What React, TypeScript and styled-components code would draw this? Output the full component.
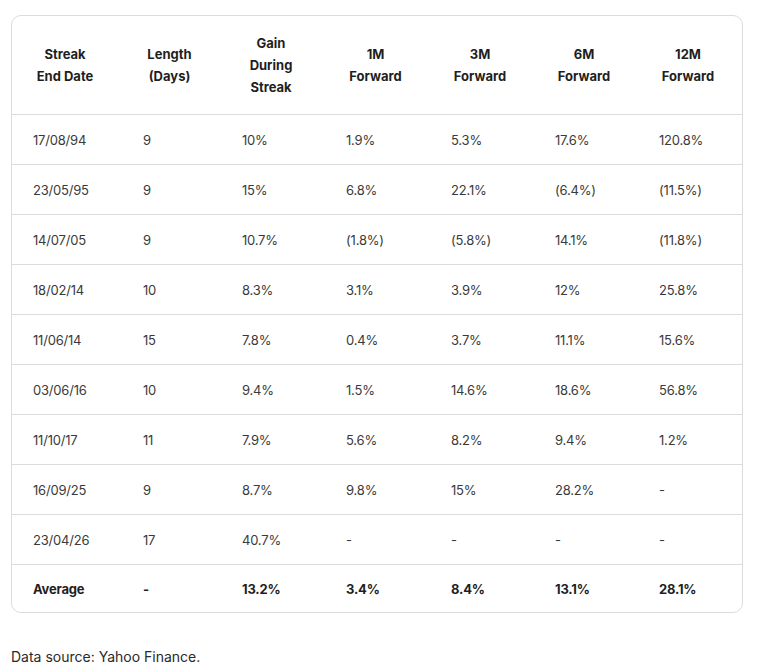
import React from "react"
import styled, { createGlobalStyle } from "styled-components"

const GlobalStyle = createGlobalStyle`
    body {
        margin: 0;
        background: #fff;
        font-family: Inter, "Liberation Sans", sans-serif;
        color: #333;
    }
`

type Row = string[]

const headers = [
    ["Streak", "End Date"],
    ["Length", "(Days)"],
    ["Gain", "During", "Streak"],
    ["1M", "Forward"],
    ["3M", "Forward"],
    ["6M", "Forward"],
    ["12M", "Forward"],
]

const rows: Row[] = [
    ["17/08/94", "9", "10%", "1.9%", "5.3%", "17.6%", "120.8%"],
    ["23/05/95", "9", "15%", "6.8%", "22.1%", "(6.4%)", "(11.5%)"],
    ["14/07/05", "9", "10.7%", "(1.8%)", "(5.8%)", "14.1%", "(11.8%)"],
    ["18/02/14", "10", "8.3%", "3.1%", "3.9%", "12%", "25.8%"],
    ["11/06/14", "15", "7.8%", "0.4%", "3.7%", "11.1%", "15.6%"],
    ["03/06/16", "10", "9.4%", "1.5%", "14.6%", "18.6%", "56.8%"],
    ["11/10/17", "11", "7.9%", "5.6%", "8.2%", "9.4%", "1.2%"],
    ["16/09/25", "9", "8.7%", "9.8%", "15%", "28.2%", "-"],
    ["23/04/26", "17", "40.7%", "-", "-", "-", "-"],
]

const average: Row = ["Average", "-", "13.2%", "3.4%", "8.4%", "13.1%", "28.1%"]

const colWidths = [110, 99, 104, 105, 104, 104, 104]

const Page = styled.div`
    padding: 15px 17px 0 11px;
`

const Card = styled.div`
    width: 730px;
    border: 1px solid #dcdcdc;
    border-radius: 10px;
    overflow: hidden;
`

const Table = styled.table`
    width: 100%;
    border-collapse: collapse;
    table-layout: fixed;
`

const HeadCell = styled.th`
    height: 98px;
    padding: 0 25px 0 21px;
    text-align: center;
    vertical-align: middle;
    font-size: 13px;
    font-weight: 700;
    line-height: 22px;
    color: #1f1f1f;
`

const BodyRow = styled.tr`
    border-top: 1px solid #dcdcdc;
`

const Cell = styled.td<{ $bold?: boolean }>`
    height: ${p => (p.$bold ? 47 : 49)}px;
    padding: 0 0 0 21px;
    text-align: left;
    vertical-align: middle;
    font-size: 13px;
    font-weight: ${p => (p.$bold ? 700 : 400)};
    color: ${p => (p.$bold ? "#1f1f1f" : "#3a3a3a")};
    letter-spacing: -0.2px;
`

const Source = styled.p`
    margin: 35px 0 0;
    font-size: 14px;
    color: #2a2a2a;
`

export default function App() {
    return (
        <Page>
            <GlobalStyle />
            <Card>
                <Table>
                    <colgroup>
                        {colWidths.map((w, i) => <col key={i} style={{ width: w }} />)}
                    </colgroup>
                    <thead>
                        <tr>
                            {headers.map((lines, i) => (
                                <HeadCell key={i}>
                                    {lines.map((l, j) => <div key={j}>{l}</div>)}
                                </HeadCell>
                            ))}
                        </tr>
                    </thead>
                    <tbody>
                        {rows.map((r, i) => (
                            <BodyRow key={i}>
                                {r.map((v, j) => <Cell key={j}>{v}</Cell>)}
                            </BodyRow>
                        ))}
                        <BodyRow>
                            {average.map((v, j) => <Cell key={j} $bold>{v}</Cell>)}
                        </BodyRow>
                    </tbody>
                </Table>
            </Card>
            <Source>Data source: Yahoo Finance.</Source>
        </Page>
    )
}
